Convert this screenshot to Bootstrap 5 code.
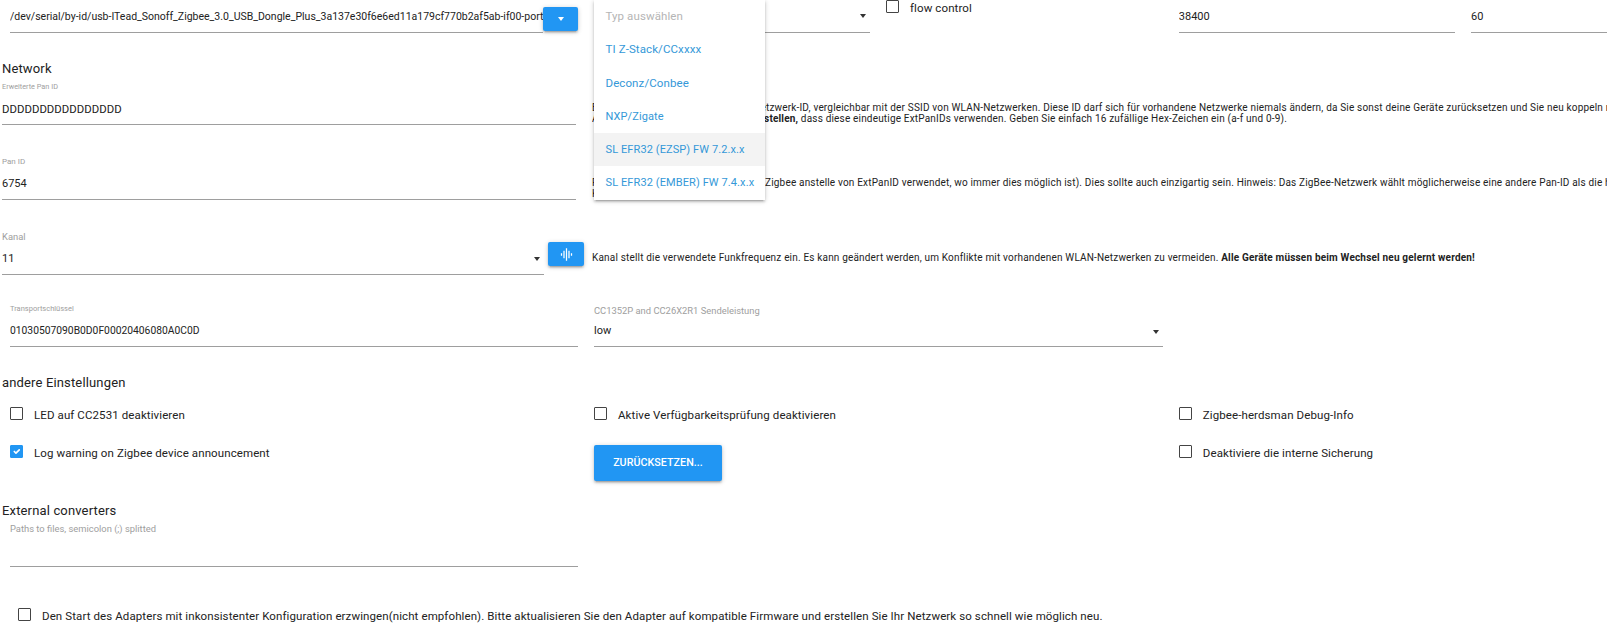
<!DOCTYPE html>
<html lang="de">
<head>
<meta charset="utf-8">
<title>Zigbee</title>
<link href="https://cdn.jsdelivr.net/npm/bootstrap@5.3.0/dist/css/bootstrap.min.css" rel="stylesheet">
<style>
body{font-family:Roboto,"Liberation Sans",sans-serif;color:#222;background:#fff;font-size:12px;height:639px;width:1607px}
.lbl{height:12px;line-height:12px;font-size:8px;color:#9e9e9e;white-space:nowrap}
.lbl-big{font-size:9.4px}
.lbl-ext{font-size:7.3px}
.lbl-tr{font-size:7.5px}
.val{height:33px;line-height:34px;font-size:11px;border-bottom:1px solid #9e9e9e;white-space:nowrap;overflow:hidden;position:relative}
.val-path{font-size:10.5px}
.val-tall{height:32px;line-height:32px}
.val-d{font-size:11.4px}
.val-hex{font-size:10.3px}
.caret{position:absolute;right:4px;top:50%;margin-top:-2px;width:0;height:0;border-left:3.5px solid transparent;border-right:3.5px solid transparent;border-top:4px solid #333}
.sq-btn{background:#2196f3;border-radius:2px;box-shadow:0 2px 2px rgba(0,0,0,.14),0 3px 1px -2px rgba(0,0,0,.12),0 1px 5px rgba(0,0,0,.2);height:24px;display:flex;align-items:center;justify-content:center;flex:none}
.sq-caret{width:0;height:0;border-left:3.5px solid transparent;border-right:3.5px solid transparent;border-top:4px solid #fff}
.head{font-size:13px;line-height:16px;color:#222;letter-spacing:.15px}
.hlp{font-size:10px;line-height:11px;white-space:nowrap;margin-top:21px;color:#222;letter-spacing:.18px;flex:1 1 0;min-width:0;overflow:hidden}
.hlp b{font-weight:700}
.menu-box.dropdown-menu{position:absolute;left:0;top:0;width:171px;min-width:0;height:200px;margin:0;padding:0;border:0;border-radius:0;box-shadow:0 2px 2px rgba(0,0,0,.14),0 3px 1px -2px rgba(0,0,0,.12),0 1px 5px rgba(0,0,0,.2);z-index:5;font-size:12px}
.menu-box .dropdown-item{height:33.3px;line-height:33.3px;padding:0 0 0 12px;color:#3498d8;font-size:11.5px;letter-spacing:.1px;white-space:nowrap}
.menu-box .dropdown-item.disabled{color:#b5b5b5}
.menu-box .dropdown-item.caps{font-size:11px}
.menu-box .dropdown-item.hov{background:#f3f3f3}
.form-check-input.cb{width:13px;height:13px;margin:0;border:1px solid #444;border-radius:1px;flex:none;float:none}
.form-check-input.cb:checked{background-color:#2196f3;border-color:#2196f3}
.cb-row{display:flex;align-items:flex-start;gap:11px;font-size:11.5px;line-height:13px;white-space:nowrap;color:#222;letter-spacing:.1px}
.cb-row span{padding-top:1.5px}
.r-top{height:33px;padding-left:10px}
.w-a{width:533px;flex:none}.w-b{width:276px;flex:none}.w-c{width:276.2px;flex:none}
.gap-1a{margin-left:15.5px}.gap-1b{margin-left:16.5px}
.gap-1c{margin-left:292.8px}.gap-1d{margin-left:16px}
.top-btn{width:35px;margin-top:7px}
.chan-btn{width:36px;margin-top:11px;margin-left:4px}
.flow{width:0;flex:none}
.s-net{margin-top:28px;padding-left:2px}
.r-ext{margin-top:3.5px;padding-left:2px}
.r-pan{margin-top:31px;padding-left:2px}
.r-chan{margin-top:31.5px;padding-left:2px}
.w-f{width:574px;flex:none}.w-ch{width:542px;flex:none}
.hm{margin-left:16px}.hm2{margin-left:8px}
.r-trans{margin-top:28px;padding-left:10px}
.w-t{width:568px;flex:none}.w-l{width:569px;margin-left:16px;flex:none}
.lb-off{padding-top:2px;height:14px}
.val-off{height:30px;line-height:28px}
.s-other{margin-top:28px;padding-left:2px}
.gr{margin-top:16px;padding-left:10px;display:grid;grid-template-columns:584px 584.8px 1fr;grid-template-rows:38px 36px}
.rst{width:128px;height:36px;background:#2196f3;color:#fff;border:0;border-radius:2px;font-size:10.7px;font-weight:500;padding:0;letter-spacing:.05px;box-shadow:0 2px 2px rgba(0,0,0,.14),0 3px 1px -2px rgba(0,0,0,.12),0 1px 5px rgba(0,0,0,.2)}
.s-ext{margin-top:22px;padding-left:2px}
.r-conv{margin-top:4px;padding-left:10px}
.conv-line{width:568px;height:32px;border-bottom:1px solid #9e9e9e}
.r-force{margin-top:41px;padding-left:18px}
</style>
</head>
<body class="overflow-hidden m-0">
<div class="d-flex r-top">
  <div class="val w-a val-path">/dev/serial/by-id/usb-ITead_Sonoff_Zigbee_3.0_USB_Dongle_Plus_3a137e30f6e6ed11a179cf770b2af5ab-if00-port0</div>
  <div class="sq-btn top-btn"><span class="sq-caret"></span></div>
  <div class="position-relative w-b gap-1a">
    <div class="val w-100"><span class="caret"></span></div>
    <div class="dropdown-menu show menu-box">
      <span class="dropdown-item disabled">Typ auswählen</span>
      <span class="dropdown-item">TI Z-Stack/CCxxxx</span>
      <span class="dropdown-item">Deconz/Conbee</span>
      <span class="dropdown-item caps">NXP/Zigate</span>
      <span class="dropdown-item caps hov">SL EFR32 (EZSP) FW 7.2.x.x</span>
      <span class="dropdown-item caps">SL EFR32 (EMBER) FW 7.4.x.x</span>
    </div>
  </div>
  <label class="cb-row gap-1b flow"><input class="form-check-input cb" type="checkbox"><span>flow control</span></label>
  <div class="val w-c gap-1c">38400</div>
  <div class="val flex-grow-1 gap-1d">60</div>
</div>

<div class="head s-net">Network</div>
<div class="d-flex r-ext">
  <div class="w-f"><div class="lbl lbl-ext">Erweiterte Pan ID</div><div class="val val-tall val-d">DDDDDDDDDDDDDDDD</div></div>
  <div class="hlp hm">Erweiterte PanID ist die eindeutige Netzwerk-ID, vergleichbar mit der SSID von WLAN-Netzwerken. Diese ID darf sich für vorhandene Netzwerke niemals ändern, da Sie sonst deine Geräte zurücksetzen und Sie neu koppeln müssen.<br>Alle Benutzer sollten so Netzwerke <b>erstellen,</b> dass diese eindeutige ExtPanIDs verwenden. Geben Sie einfach 16 zufällige Hex-Zeichen ein (a-f und 0-9).</div>
</div>
<div class="d-flex r-pan">
  <div class="w-f"><div class="lbl">Pan ID</div><div class="val val-tall">6754</div></div>
  <div class="hlp hm">Pan ID ist ja eine kürzere Version von Zigbee anstelle von ExtPanID verwendet, wo immer dies möglich ist). Dies sollte auch einzigartig sein. Hinweis: Das ZigBee-Netzwerk wählt möglicherweise eine andere Pan-ID als die hier angegebene.<br>Konflikte</div>
</div>
<div class="d-flex r-chan">
  <div class="w-ch"><div class="lbl lbl-big">Kanal</div><div class="val val-tall">11<span class="caret"></span></div></div>
  <div class="sq-btn chan-btn"><svg width="15" height="15" viewBox="0 0 24 24" fill="#fff" aria-hidden="true"><path d="M7 18h2V6H7v12zm4 4h2V2h-2v20zm-8-8h2v-4H3v4zm12 4h2V6h-2v12zm4-8v4h2v-4h-2z"/></svg></div>
  <div class="hlp hm2">Kanal stellt die verwendete Funkfrequenz ein. Es kann geändert werden, um Konflikte mit vorhandenen WLAN-Netzwerken zu vermeiden. <b>Alle Geräte müssen beim Wechsel neu gelernt werden!</b></div>
</div>
<div class="d-flex r-trans">
  <div class="w-t"><div class="lbl lbl-tr">Transportschlüssel</div><div class="val val-tall val-hex">01030507090B0D0F00020406080A0C0D</div></div>
  <div class="w-l"><div class="lbl lbl-big lb-off">CC1352P and CC26X2R1 Sendeleistung</div><div class="val val-off">low<span class="caret"></span></div></div>
</div>

<div class="head s-other">andere Einstellungen</div>
<div class="gr">
  <label class="cb-row"><input class="form-check-input cb" type="checkbox"><span>LED auf CC2531 deaktivieren</span></label>
  <label class="cb-row"><input class="form-check-input cb" type="checkbox"><span>Aktive Verfügbarkeitsprüfung deaktivieren</span></label>
  <label class="cb-row"><input class="form-check-input cb" type="checkbox"><span>Zigbee-herdsman Debug-Info</span></label>
  <label class="cb-row"><input class="form-check-input cb" type="checkbox" checked><span>Log warning on Zigbee device announcement</span></label>
  <div><button class="btn rst" type="button">ZURÜCKSETZEN...</button></div>
  <label class="cb-row"><input class="form-check-input cb" type="checkbox"><span>Deaktiviere die interne Sicherung</span></label>
</div>

<div class="head s-ext">External converters</div>
<div class="r-conv">
  <div class="lbl lbl-big">Paths to files, semicolon (;) splitted</div>
  <div class="conv-line"></div>
</div>
<div class="r-force">
  <label class="cb-row"><input class="form-check-input cb" type="checkbox"><span>Den Start des Adapters mit inkonsistenter Konfiguration erzwingen(nicht empfohlen). Bitte aktualisieren Sie den Adapter auf kompatible Firmware und erstellen Sie Ihr Netzwerk so schnell wie möglich neu.</span></label>
</div>
<script src="https://cdn.jsdelivr.net/npm/bootstrap@5.3.0/dist/js/bootstrap.bundle.min.js"></script>
</body>
</html>
